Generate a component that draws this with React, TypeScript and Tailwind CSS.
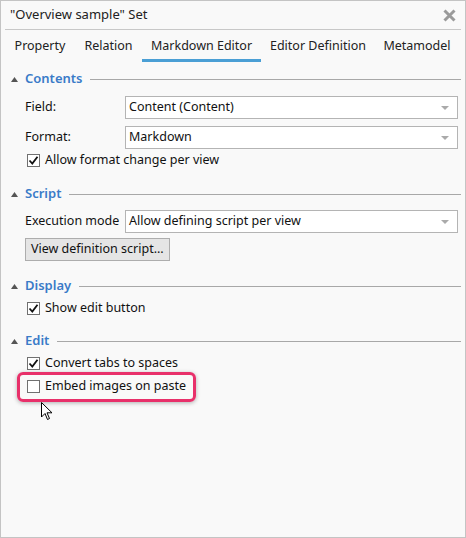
import React from "react";

const font = { fontFamily: '"Noto Sans", "Liberation Sans", sans-serif' };

function Section({ title, children }: { title: string; children: React.ReactNode }) {
  return (
    <div>
      <div className="flex items-center h-[22px] pl-[10px] pr-[4px]">
        <svg width="7" height="5" viewBox="0 0 7 5" className="mr-[7px]">
          <path d="M0 5 L3.5 0 L7 5 Z" fill="#555" />
        </svg>
        <span className="text-[#3a7bc8] text-[13px] font-semibold">{title}</span>
        <div className="flex-1 h-px bg-[#a8a8a8] ml-2" />
      </div>
      <div className="pl-[24px] pr-[7px]">{children}</div>
    </div>
  );
}

function Select({ value }: { value: string }) {
  return (
    <div className="flex-1 h-[23px] border border-[#b4b4b4] bg-white flex items-center pl-[3px] pr-[8px]">
      <span className="flex-1 text-[12.5px] text-[#111] whitespace-nowrap">{value}</span>
      <svg width="8" height="4" viewBox="0 0 8 4">
        <path d="M0 0 L8 0 L4 4 Z" fill="#aaa" />
      </svg>
    </div>
  );
}

function Check({ checked, label }: { checked: boolean; label: string }) {
  return (
    <div className="flex items-center h-[23px] text-[12.5px] text-[#111]">
      <div className="w-[13px] h-[13px] border border-[#707070] bg-white ml-[2px] mr-[5px] flex items-center justify-center">
        {checked && (
          <svg width="11" height="11" viewBox="0 0 11 11">
            <path d="M1.5 5.5 L4.3 8.5 L9.5 1.8" stroke="#111" strokeWidth="1.8" fill="none" />
          </svg>
        )}
      </div>
      <span className="whitespace-nowrap">{label}</span>
    </div>
  );
}

const tabs = [
  { label: "Property", w: "w-[70px]" },
  { label: "Relation", w: "w-[67px]" },
  { label: "Markdown Editor", w: "w-[119px]" },
  { label: "Editor Definition", w: "w-[114px]" },
  { label: "Metamodel", w: "w-[84px]" },
];

export default function App() {
  return (
    <div style={font} className="w-[466px] h-[538px] bg-[#f9f9f9] border border-[#c4c4c4] relative overflow-hidden">
      {/* title bar */}
      <div className="flex items-center h-[29px] pl-[5px] pr-[5px] mx-[4px] border-b border-[#c8c8c8]">
        <span className="flex-1 text-[13px] text-[#222]">"Overview sample" Set</span>
        <svg width="13" height="13" viewBox="0 0 13 13">
          <path d="M1.5 1.5 L11.5 11.5 M11.5 1.5 L1.5 11.5" stroke="#9a9a9a" strokeWidth="3" />
        </svg>
      </div>

      {/* tabs */}
      <div className="flex h-[31px] pl-[4px] mt-[1px]">
        {tabs.map((t) => (
          <div
            key={t.label}
            className={
              t.w +
              " flex items-center justify-center pt-[3px] whitespace-nowrap text-[12.5px] text-[#222] border-b-[3px] " +
              (t.label === "Markdown Editor" ? "border-[#4a9fd5]" : "border-transparent")
            }
          >
            {t.label}
          </div>
        ))}
      </div>

      <div className="mt-[6px] flex flex-col">
        <Section title="Contents">
          <div className="flex items-center mt-[6px] text-[12.5px] text-[#111]">
            <span className="w-[100px]">Field:</span>
            <Select value="Content (Content)" />
          </div>
          <div className="flex items-center mt-[7px] text-[12.5px] text-[#111]">
            <span className="w-[100px]">Format:</span>
            <Select value="Markdown" />
          </div>
          <Check checked label="Allow format change per view" />
        </Section>

        <div className="h-[11px]" />
        <Section title="Script">
          <div className="flex items-center mt-[5px] text-[12.5px] text-[#111]">
            <span className="w-[100px]">Execution mode</span>
            <Select value="Allow defining script per view" />
          </div>
          <button className="mt-[5px] h-[23px] px-[5px] border border-[#adadad] bg-[#e5e5e5] text-[12.5px] text-[#111]">
            View definition script...
          </button>
        </Section>

        <div className="h-[14px]" />
        <Section title="Display">
          <Check checked label="Show edit button" />
        </Section>

        <div className="h-[10px]" />
        <Section title="Edit">
          <Check checked label="Convert tabs to spaces" />
          <div className="relative">
            <Check checked={false} label="Embed images on paste" />
            <div className="absolute left-[-8px] top-[-3px] w-[179px] h-[30px] border-[3px] border-[#e8306a] rounded-[6px] shadow-[0_1px_4px_rgba(0,0,0,0.3)]" />
          </div>
        </Section>
      </div>

      {/* cursor */}
      <svg className="absolute left-[40px] top-[401px]" width="12" height="19" viewBox="0 0 12 19">
        <path d="M0.5 0.5 L0.5 15 L4 11.5 L6.5 17.5 L8.5 16.5 L6 10.8 L11 10.8 Z" fill="#fff" stroke="#000" strokeWidth="1" />
      </svg>
    </div>
  );
}
